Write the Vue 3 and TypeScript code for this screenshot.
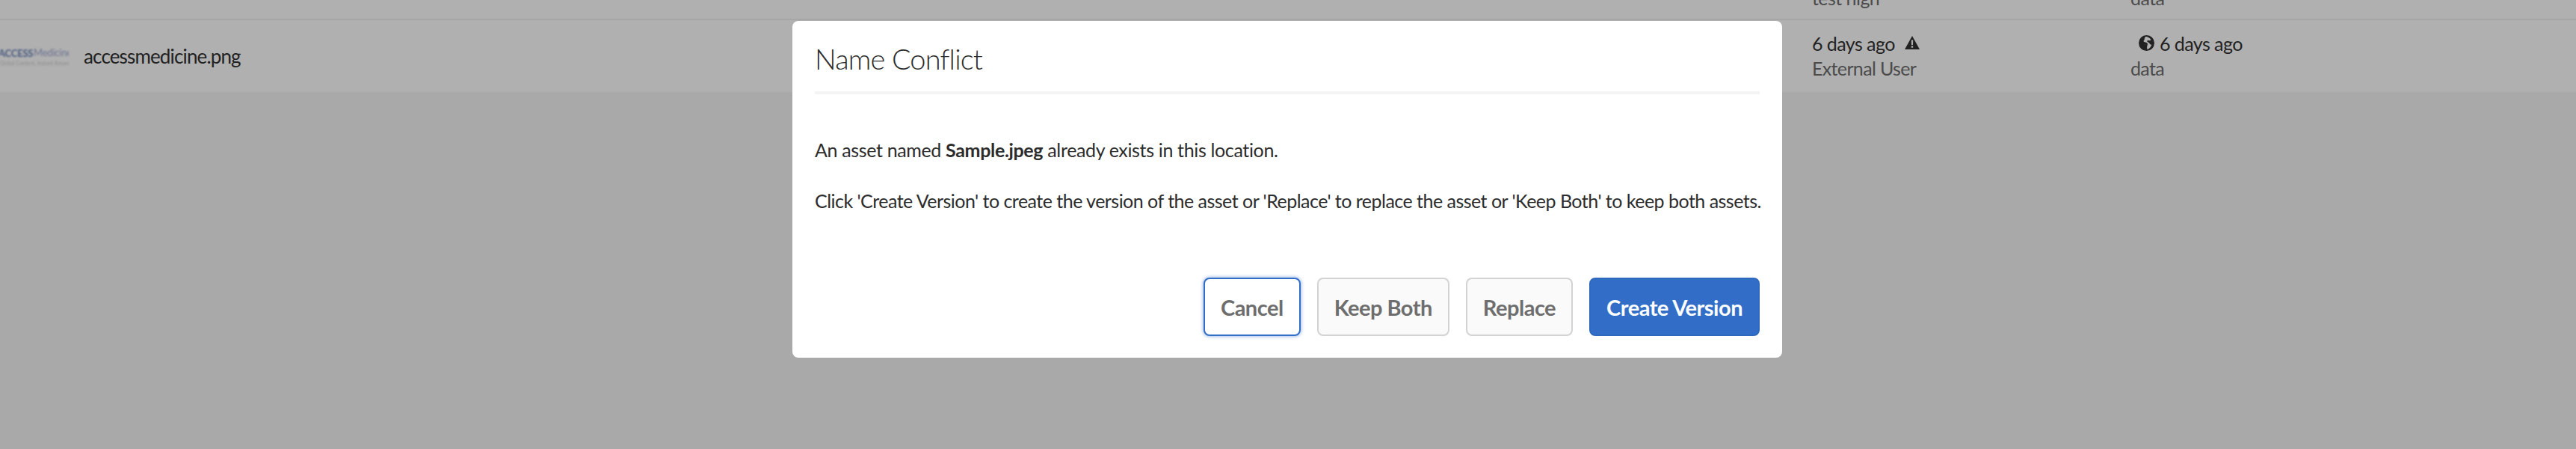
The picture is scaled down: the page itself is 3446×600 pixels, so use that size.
<script setup lang="ts">
const buttons: { label: string; kind: string }[] = [
  { label: 'Cancel', kind: 'focus' },
  { label: 'Keep Both', kind: 'plain' },
  { label: 'Replace', kind: 'plain' },
  { label: 'Create Version', kind: 'primary' }
]
</script>

<template>
  <div class="page">
    <div class="prev-row">
      <span class="prev-a">test high</span>
      <span class="prev-b">data</span>
    </div>
    <div class="row">
      <div class="name-cell">
        <div class="thumb"><span class="logo-a">ACCESS</span><span class="logo-b">Medicine</span><span class="logo-c">Global Content, Instant Answers</span></div>
        <span class="name">accessmedicine.png</span>
      </div>
      <div class="col-mod">
        <div class="line">6 days ago
          <svg class="icon" viewBox="0 0 20 18"><path d="M10 0 20 18H0Z M8.800 5.500 9 12H11L11.200 5.500Z M8.800 13.200V15.800H11.200V13.200Z" fill-rule="evenodd" fill="#222"/></svg>
        </div>
        <div class="sub">External User</div>
      </div>
      <div class="col-pub">
        <div class="line">
          <svg class="globe" viewBox="0 0 21 21"><path d="M10.500 0a10.500 10.500 0 1 0 0 21 10.500 10.500 0 0 0 0-21Zm-1 1.500C8.800 3 7.500 3.300 7.800 5c.3 1.300-1 1.500-1.200 2.800-.2 1.300 1.300 1.500 2.400 1.800 1.500.4 2.700.6 2.900 2 .2 1.800-1 3.200-.8 5.400.1.800.3 1.700.6 2.300 2.800-1.500 5-3.800 5.600-6.500-1.200.2-2.200-.6-2.800-1.700-.7-1.200-2.100-1.400-3-2.300-.8-.8.200-2 1.500-1.700 1.200.3 2.700.1 3.500-.6-1-2.300-4.200-4.700-7-4.500Z" fill-rule="evenodd" fill="#222"/></svg>
          6 days ago
        </div>
        <div class="sub">data</div>
      </div>
    </div>

    <div class="dialog">
      <h2 class="title">Name Conflict</h2>
      <div class="body">
        <p class="lead">An asset named <b>Sample.jpeg</b> already exists in this location.</p>
        <p>Click 'Create Version' to create the version of the asset or 'Replace' to replace the asset or 'Keep Both' to keep both assets.</p>
      </div>
      <div class="actions">
        <button v-for="b in buttons" :key="b.label" :class="['btn', b.kind]">{{ b.label }}</button>
      </div>
    </div>
  </div>
</template>

<style>
html, body { margin: 0; background: #a9a9a9; }
</style>

<style scoped>
.page {
  position: relative;
  width: 3446px;
  height: 600px;
  overflow: hidden;
  background: #a9a9a9;
  font-family: Lato, "Open Sans", sans-serif;
  color: #222;
}
.prev-row {
  height: 25px;
  background: #b0b0b0;
  border-bottom: 2px solid #a6a6a6;
  position: relative;
  overflow: hidden;
  font-size: 25px;
  letter-spacing: -0.55px;
  line-height: 30px;
  color: #4b4b4b;
}
.prev-a { position: absolute; left: 2424px; bottom: 13px; }
.prev-b { position: absolute; left: 2850px; bottom: 13px; }
.row {
  height: 96px;
  background: #b0b0b0;
  display: grid;
  grid-template-columns: 2424px 426px 1fr;
  align-items: center;
}
.name-cell { display: flex; align-items: center; }
.thumb {
  width: 92px;
  height: 30px;
  margin-right: 20px;
  position: relative;
  overflow: hidden;
  filter: blur(0.8px);
}
.logo-a { position: absolute; left: -2px; top: 3px; font-size: 13px; font-weight: 700; color: #47597f; letter-spacing: -0.2px; }
.logo-b { position: absolute; left: 45px; top: 2px; font-size: 13px; color: #6b7291; letter-spacing: -0.2px; }
.logo-c { position: absolute; left: 0; top: 20px; font-size: 7px; color: #8d8d8d; white-space: nowrap; }
.name { font-size: 26px; letter-spacing: -0.85px; }
.line { font-size: 25px; letter-spacing: -0.55px; line-height: 33px; display: flex; align-items: center; gap: 13px; }
.sub { font-size: 25px; letter-spacing: -0.65px; line-height: 33px; color: #4b4b4b; }
.icon { width: 20px; height: 18px; margin-top: -4px; }
.globe { width: 21px; height: 21px; margin-top: -2px; margin-right: -6px; }
.col-pub .line { margin-left: 11px; }
.dialog {
  position: absolute;
  left: 1060px;
  top: 28px;
  width: 1324px;
  height: 450px;
  background: #fff;
  border-radius: 8px;
  padding: 0 30px;
  box-sizing: border-box;
}
.title {
  margin: 0;
  height: 98px;
  box-sizing: border-box;
  padding-top: 25px;
  font-size: 38px;
  letter-spacing: -0.85px;
  line-height: 50px;
  font-weight: 300;
  color: #2c2c2c;
  border-bottom: 4px solid #f4f4f4;
}
.body {
  padding-top: 57px;
  font-size: 25px;
  letter-spacing: -0.52px;
  color: #2c2c2c;
}
.body p { margin: 0 0 34px; line-height: 34px; white-space: nowrap; }
.body .lead { letter-spacing: -0.35px; }
.body b { font-weight: 700; }
.actions {
  position: absolute;
  right: 30px;
  bottom: 29px;
  display: flex;
  gap: 22px;
}
.btn {
  height: 78px;
  padding: 0 21px;
  border-radius: 8px;
  font-family: inherit;
  font-size: 29px;
  letter-spacing: -0.5px;
  font-weight: 700;
  color: #6e6e6e;
  box-sizing: border-box;
}
.plain { background: #fafafa; border: 2px solid #d3d3d3; }
.focus { background: #fff; border: 2px solid #326ec8; box-shadow: 0 0 4px 1px rgba(50, 110, 200, 0.45); }
.primary { background: #326ec8; border: 2px solid #2f69be; color: #fff; }
</style>
